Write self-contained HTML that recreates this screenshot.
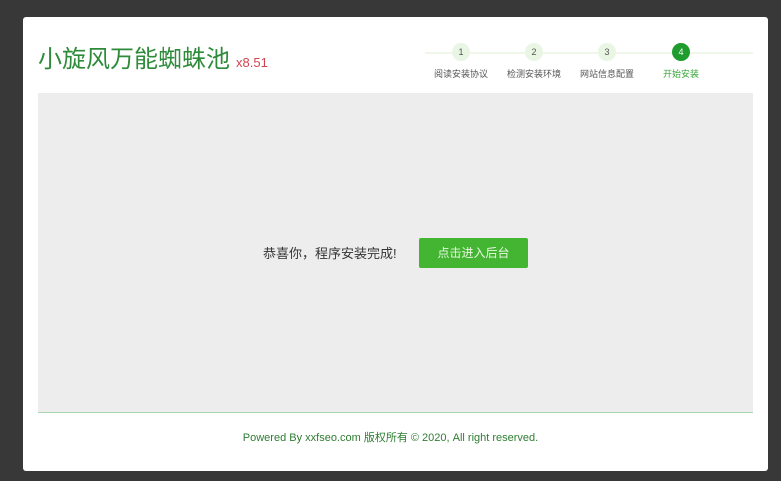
<!DOCTYPE html><html><head><meta charset="utf-8"><style>
body{margin:0;width:781px;height:481px;background:#383838;position:relative;overflow:hidden;font-family:"Liberation Sans","Noto Sans CJK SC",sans-serif}
.card{position:absolute;left:23px;top:17px;width:745px;height:454px;background:#fff;border-radius:3px}
.t{position:absolute;left:38px;top:39px;font-size:24px;color:#2e8b3a;white-space:nowrap}
.t span{font-size:13px;color:#d0454f;margin-left:6px}
.line{position:absolute;left:425px;top:52px;width:328px;height:2px;background:#eef7ea}
.st{position:absolute;top:43px;width:80px;text-align:center;font-size:9px;color:#555}
.st i{display:block;margin:0 auto 6px;width:18px;height:18px;border-radius:50%;background:#e9f6e4;font-style:normal;line-height:18px;color:#555}
.st.a{color:#3aa53a}.st.a i{background:#1e9c2e;color:#fff}
.panel{position:absolute;left:38px;top:93px;width:715px;height:319px;background:#ededed;border-bottom:1.5px solid #a8d8b0}
.msg{position:absolute;left:263px;top:243px;font-size:13px;color:#333}
.btn{position:absolute;left:419px;top:238px;width:109px;height:30px;background:#43b533;color:#e8f8e0;font-size:12px;text-align:center;line-height:30px;border-radius:2px}
.f{position:absolute;left:0;width:781px;top:429px;text-align:center;font-size:11px;color:#2e7d32}
</style></head><body>
<div class="card"></div>
<div class="t">小旋风万能蜘蛛池<span>x8.51</span></div>
<div class="line"></div>
<div class="st" style="left:421px"><i>1</i>阅读安装协议</div>
<div class="st" style="left:494px"><i>2</i>检测安装环境</div>
<div class="st" style="left:567px"><i>3</i>网站信息配置</div>
<div class="st a" style="left:641px"><i>4</i>开始安装</div>
<div class="panel"></div>
<div class="msg">恭喜你，程序安装完成!</div>
<div class="btn">点击进入后台</div>
<div class="f">Powered By xxfseo.com 版权所有 © 2020, All right reserved.</div>
</body></html>
